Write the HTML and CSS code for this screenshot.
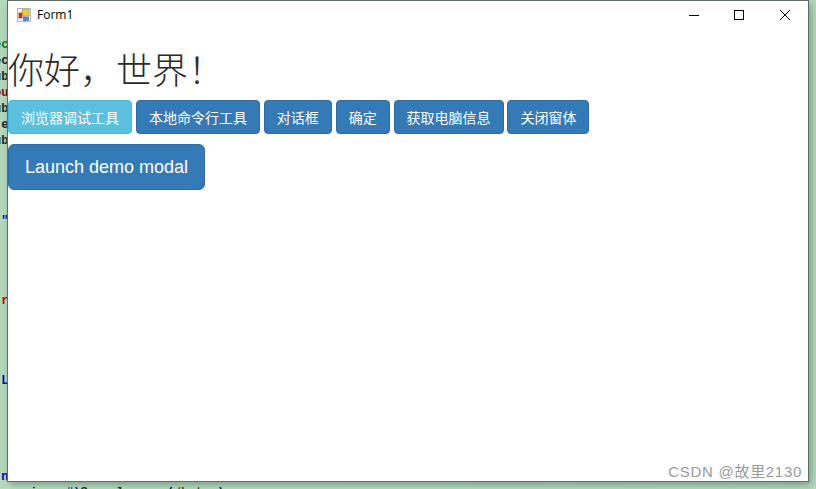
FILE: index.html
```html
<!DOCTYPE html>
<html lang="zh-CN">
<head>
<meta charset="utf-8">
<title>Form1</title>
<link rel="stylesheet" href="styles.css">
</head>
<body>
<pre class="code"><span class="green">ec</span>
<span class="dark">ec</span>
<span class="dark">ub</span>
<span class="maroon">ou</span>
<span class="dark">ub</span>
<span class="dark">.e</span>
<span class="dark">ub</span>




<span class="blue">:"</span>




<span class="red"> r</span>




<span class="blue">.L</span>





<span class="blue">.n</span>
<span class="blue">     i    #)</span><span class="dark">S    l      </span><span class="blue">(</span><span class="red">/buton</span><span class="blue">)</span></pre>

<main class="window">
  <header class="titlebar">
    <svg class="app-icon" width="14" height="14" viewBox="0 0 14 14" aria-hidden="true">
      <rect x="0.5" y="0.5" width="13" height="13" fill="#f2f2f2" stroke="#b5b5b5"/>
      <rect x="2" y="5" width="3" height="5" fill="#d8322a" stroke="#8f1f1a" stroke-width="0.6"/>
      <rect x="5.5" y="1.5" width="6.5" height="6.5" fill="#f8c83c" stroke="#b98a18" stroke-width="0.6"/>
      <rect x="6.5" y="9" width="5" height="3.5" fill="#4d8fdc" stroke="#2a5fa8" stroke-width="0.6"/>
    </svg>
    <span class="title">Form1</span>
    <div class="controls">
      <svg class="control" width="46" height="30" viewBox="0 0 46 30" aria-hidden="true"><path d="M19 14.5h10" stroke="#000" fill="none"/></svg>
      <svg class="control" width="46" height="30" viewBox="0 0 46 30" aria-hidden="true"><rect x="18.5" y="9.5" width="9" height="9" stroke="#000" fill="none"/></svg>
      <svg class="control" width="46" height="30" viewBox="0 0 46 30" aria-hidden="true"><path d="M18 9l10 10M28 9L18 19" stroke="#000" fill="none" stroke-width="1"/></svg>
    </div>
  </header>
  <section class="content">
    <h1 class="hello">你好，世界！</h1>
    <div class="button-row">
      <button class="btn btn-info">浏览器调试工具</button>
      <button class="btn btn-primary">本地命令行工具</button>
      <button class="btn btn-primary">对话框</button>
      <button class="btn btn-primary">确定</button>
      <button class="btn btn-primary">获取电脑信息</button>
      <button class="btn btn-primary">关闭窗体</button>
    </div>
    <button class="btn btn-primary btn-lg">Launch demo modal</button>
  </section>
</main>
<div class="watermark">CSDN @故里2130</div>
</body>
</html>
```
FILE: styles.css
```css
* { box-sizing: border-box; }
html, body { height: 100%; }
body {
  margin: 0;
  position: relative;
  overflow: hidden;
  background: linear-gradient(90deg, #b4d9bb 0, #bfe0c4 8px, #b9dcc0 100%);
  font-family: "Liberation Sans", "Noto Sans CJK SC", sans-serif;
}
.code {
  position: absolute;
  left: -6px;
  top: 37px;
  margin: 0;
  font: bold 12px/16px "Liberation Mono", monospace;
}
.green { color: #0a7a0a; }
.dark { color: #222; }
.maroon { color: #8b0000; }
.blue { color: #0000d0; }
.red { color: #d00000; }
.window {
  position: absolute;
  left: 7px;
  top: 0;
  width: 802px;
  height: 482px;
  background: #fff;
  border: 1px solid #5f6f66;
  box-shadow: 2px 3px 8px rgba(40, 70, 50, 0.45);
  color: #333;
}
.titlebar {
  display: flex;
  align-items: flex-start;
  height: 30px;
  padding-left: 9px;
}
.app-icon { flex: none; margin-top: 7px; }
.title {
  margin-left: 6px;
  margin-top: 6px;
  font: 12px/16px "Open Sans", sans-serif;
  color: #000;
}
.controls { display: flex; margin-left: auto; }
.control { display: block; }
.hello {
  margin: 18px 0 11px;
  font: 300 36px/39.6px "Noto Sans CJK SC", "Liberation Sans", sans-serif;
  color: #2a2a2a;
}
.button-row { margin-bottom: 10px; font-size: 14px; line-height: 34px; height: 34px; }
.btn {
  display: inline-block;
  vertical-align: top;
  padding: 6px 12px;
  height: 34px;
  font: 14px/20px "Noto Sans CJK SC", "Liberation Sans", sans-serif;
  color: #fff;
  border: 1px solid transparent;
  border-radius: 4px;
}
.btn-info { background: #5bc0de; border-color: #46b8da; }
.btn-primary { background: #337ab7; border-color: #2e6da4; }
.btn-lg {
  display: block;
  height: 46px;
  padding: 10px 16px;
  font: 18px/24px "Liberation Sans", sans-serif;
  border-radius: 6px;
}
.watermark {
  position: absolute;
  right: 14px;
  top: 462px;
  font: 15px/20px "Liberation Sans", "Noto Sans CJK SC", sans-serif;
  letter-spacing: 0.7px;
  color: rgba(125, 125, 125, 0.8);
}
```
